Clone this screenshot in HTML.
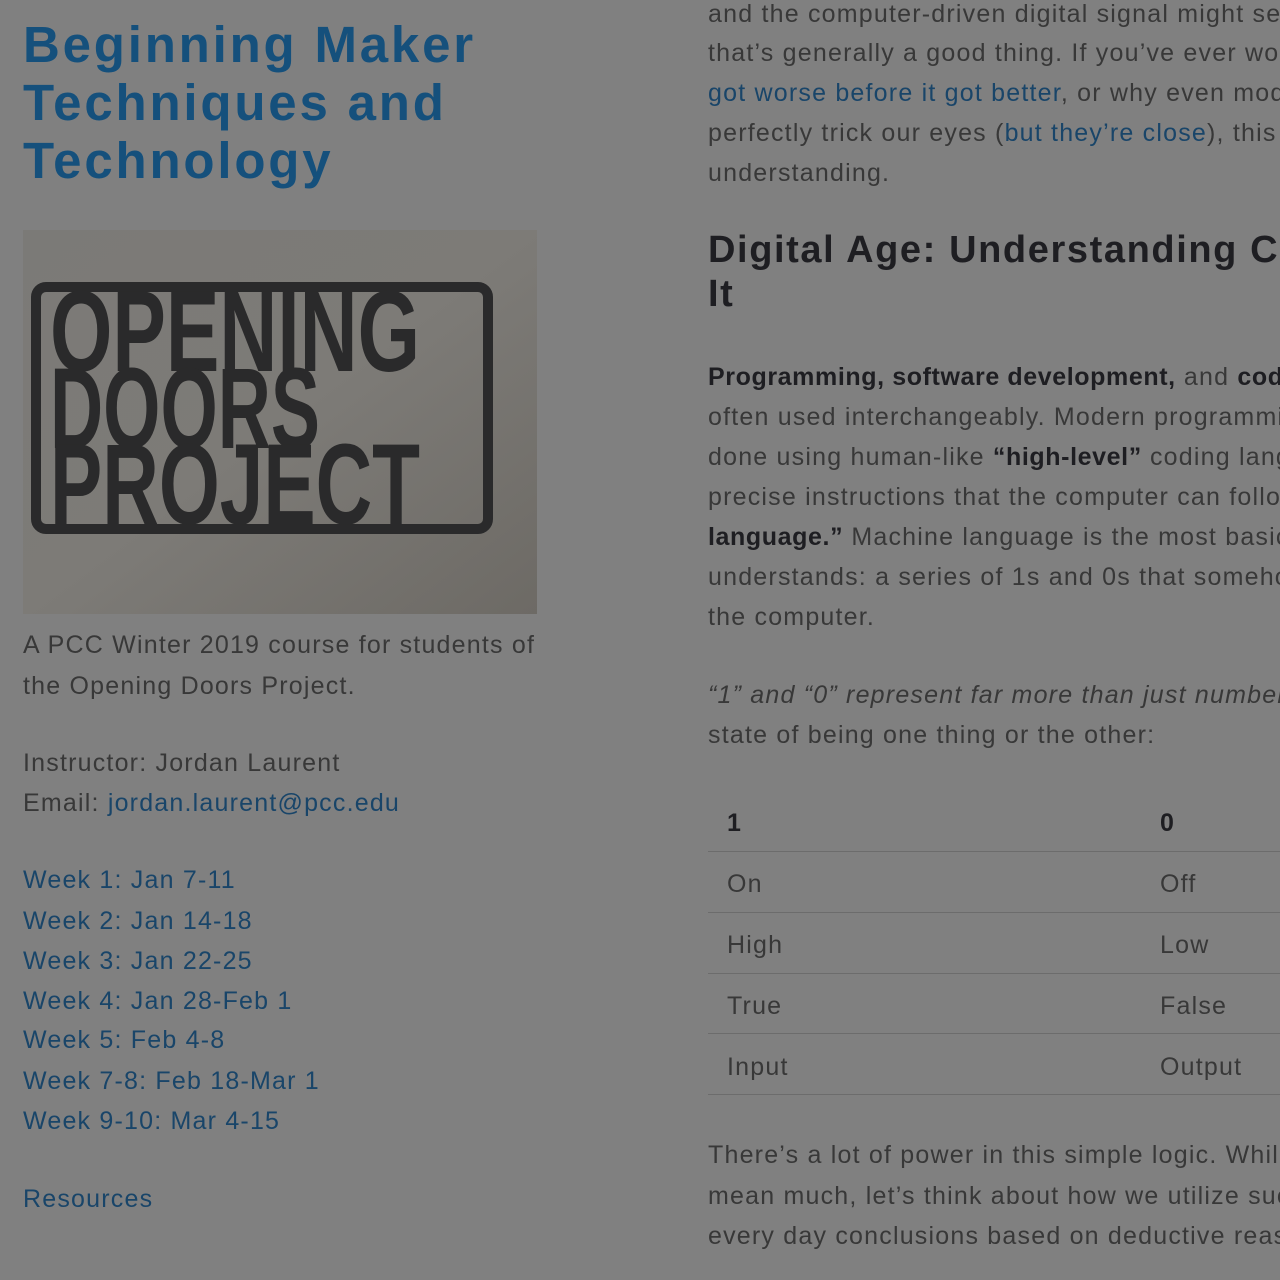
<!DOCTYPE html>
<html><head><meta charset="utf-8"><style>
html,body{margin:0;padding:0;width:1280px;height:1280px;overflow:hidden;background:#808080;}
body{position:relative;font-family:"Liberation Sans","DejaVu Sans",sans-serif;color:#383838;font-size:25px;letter-spacing:1.2px;}
.l{position:absolute;white-space:nowrap;line-height:30px;}
a{color:#194569;text-decoration:none;}
.h1{position:absolute;left:23px;top:16px;font-size:51px;font-weight:bold;color:#15507c;line-height:58px;letter-spacing:2.8px;}
.h2{position:absolute;left:0;top:228px;font-size:38px;font-weight:bold;color:#1e1e22;line-height:44px;white-space:nowrap;letter-spacing:1.6px;}
b{color:#1e1e22;letter-spacing:0.6px;}
.hr{position:absolute;left:0;width:572px;height:1px;background:#6c6c6c;}
#r{position:absolute;left:708px;top:0;width:572px;height:1280px;overflow:hidden;}
</style></head><body>
<div class="h1">Beginning Maker<br>Techniques and<br>Technology</div>
<svg style="position:absolute;left:23px;top:230px" width="514" height="384" viewBox="0 0 514 384">
<defs><linearGradient id="g" x1="0" y1="0" x2="1" y2="1"><stop offset="0" stop-color="#7b7a77"/><stop offset="0.5" stop-color="#7d7b77"/><stop offset="1" stop-color="#6d6a65"/></linearGradient></defs>
<rect width="514" height="384" fill="url(#g)"/>
<rect x="13" y="57" width="452" height="242" rx="10" fill="none" stroke="#2a2a2b" stroke-width="10"/>
<g fill="#2a2a2b" font-family="'Liberation Sans Narrow','Liberation Sans',sans-serif" font-weight="bold" letter-spacing="0">
<text x="0" y="0" font-size="100" transform="translate(27,141) scale(1,1.15)" textLength="370" lengthAdjust="spacingAndGlyphs">OPENING</text>
<text x="0" y="0" font-size="100" transform="translate(27,218) scale(1,1.15)" textLength="270" lengthAdjust="spacingAndGlyphs">DOORS</text>
<text x="0" y="0" font-size="100" transform="translate(27,294) scale(1,1.15)" textLength="370" lengthAdjust="spacingAndGlyphs">PROJECT</text>
</g></svg>
<div class="l" style="left:23px;top:630px">A PCC Winter 2019 course for students of</div>
<div class="l" style="left:23px;top:671px">the Opening Doors Project.</div>
<div class="l" style="left:23px;top:748px">Instructor: Jordan Laurent</div>
<div class="l" style="left:23px;top:788px">Email: <a>jordan.laurent@pcc.edu</a></div>
<div class="l" style="left:23px;top:865px"><a>Week 1: Jan 7-11</a></div>
<div class="l" style="left:23px;top:906px"><a>Week 2: Jan 14-18</a></div>
<div class="l" style="left:23px;top:946px"><a>Week 3: Jan 22-25</a></div>
<div class="l" style="left:23px;top:986px"><a>Week 4: Jan 28-Feb 1</a></div>
<div class="l" style="left:23px;top:1025px"><a>Week 5: Feb 4-8</a></div>
<div class="l" style="left:23px;top:1066px"><a>Week 7-8: Feb 18-Mar 1</a></div>
<div class="l" style="left:23px;top:1106px"><a>Week 9-10: Mar 4-15</a></div>
<div class="l" style="left:23px;top:1184px"><a>Resources</a></div>
<div id="r">
<div class="l" style="left:0;top:-1px">and the computer-driven digital signal might seem</div>
<div class="l" style="left:0;top:38px">that’s generally a good thing. If you’ve ever wondered</div>
<div class="l" style="left:0;top:78px"><a>got worse before it got better</a>, or why even modern</div>
<div class="l" style="left:0;top:118px">perfectly trick our eyes (<a>but they’re close</a>), this is</div>
<div class="l" style="left:0;top:158px">understanding.</div>
<div class="h2">Digital Age: Understanding Code<br>It</div>
<div class="l" style="left:0;top:362px"><b>Programming, software development,</b> and <b>coding</b></div>
<div class="l" style="left:0;top:402px">often used interchangeably. Modern programming is</div>
<div class="l" style="left:0;top:442px">done using human-like <b>“high-level”</b> coding languages</div>
<div class="l" style="left:0;top:482px">precise instructions that the computer can follow</div>
<div class="l" style="left:0;top:522px"><b>language.”</b> Machine language is the most basic</div>
<div class="l" style="left:0;top:562px">understands: a series of 1s and 0s that somehow</div>
<div class="l" style="left:0;top:602px">the computer.</div>
<div class="l" style="left:0;top:680px;font-style:italic">“1” and “0” represent far more than just numbers</div>
<div class="l" style="left:0;top:720px">state of being one thing or the other:</div>
<div class="l" style="left:19px;top:808px"><b>1</b></div><div class="l" style="left:452px;top:808px"><b>0</b></div>
<div class="hr" style="top:851px"></div>
<div class="l" style="left:19px;top:869px">On</div><div class="l" style="left:452px;top:869px">Off</div>
<div class="hr" style="top:912px"></div>
<div class="l" style="left:19px;top:930px">High</div><div class="l" style="left:452px;top:930px">Low</div>
<div class="hr" style="top:973px"></div>
<div class="l" style="left:19px;top:991px">True</div><div class="l" style="left:452px;top:991px">False</div>
<div class="hr" style="top:1033px"></div>
<div class="l" style="left:19px;top:1052px">Input</div><div class="l" style="left:452px;top:1052px">Output</div>
<div class="hr" style="top:1094px"></div>
<div class="l" style="left:0;top:1140px">There’s a lot of power in this simple logic. While</div>
<div class="l" style="left:0;top:1181px">mean much, let’s think about how we utilize such</div>
<div class="l" style="left:0;top:1221px">every day conclusions based on deductive reasoning</div>
</div>
</body></html>
